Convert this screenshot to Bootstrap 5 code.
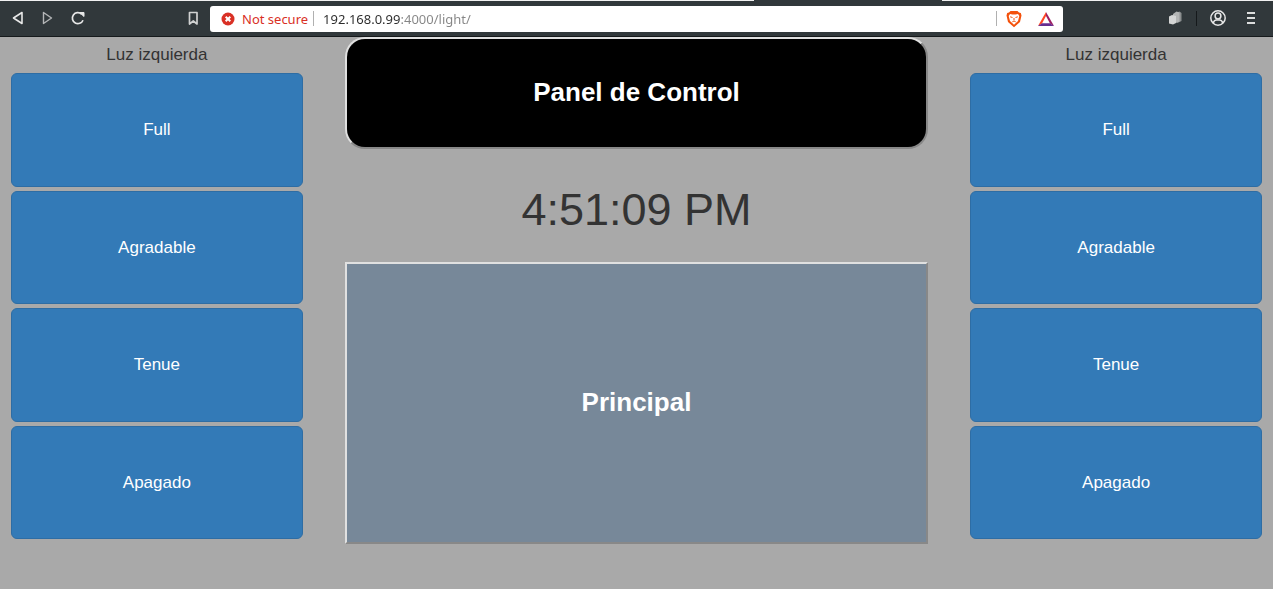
<!DOCTYPE html>
<html lang="es">
<head>
<meta charset="utf-8">
<meta name="viewport" content="width=device-width, initial-scale=1">
<title>Panel de Control</title>
<link href="https://cdn.jsdelivr.net/npm/bootstrap@5.3.0/dist/css/bootstrap.min.css" rel="stylesheet">
<style>
  body { background: #a9a9a9; color: #333; font-family: "Liberation Sans", Arial, sans-serif; font-size: 17px; line-height: 24px; }

  /* browser toolbar */
  .tab-edge { height: 1px; background: linear-gradient(to right, #f2f2f2 754px, #31383b 754px 942px, #f2f2f2 942px); }
  .toolbar { height: 36px; background: #31383b; border-bottom: 1px solid #161a1c; font-family: "Noto Sans", sans-serif; font-size: 13px; line-height: 18px; }
  .tool-btn { width: 30px; height: 26px; padding: 0 0 2px; color: #e8e8e8; }
  .tool-btn svg, .address svg { display: block; }
  .nav-tools { width: 208px; padding-left: 3px; }
  .menu-tools { width: 113px; padding-right: 7px; }
  .address { height: 26px; margin: 0 97px 0 2px; padding: 0 8px 0 11px; border-radius: 3px; background: #fff; }
  .warn { margin: 0 5px 0 7px; color: #d93025; }
  .divider { width: 1px; height: 15px; background: #b0b0b0; }
  .divider-dark { width: 1px; height: 15px; margin: 0 6px; background: #15191b; }
  .url { min-width: 0; margin-left: 9px; color: transparent; background: linear-gradient(to right, #2c2c2c 77px, #858585 77px); -webkit-background-clip: text; background-clip: text; outline: 0; }
  .shield { margin: 0 15px 0 9px; }

  /* control panel */
  .panel-grid { display: grid; grid-template-columns: 1fr 2fr 1fr; column-gap: 42px; padding: 0 11px; }
  .side-title { font-size: 17px; line-height: 24px; padding: 6px 0; }
  .light-list { display: grid; grid-auto-rows: 1fr; gap: 4px; min-height: 466px; }
  .btn-light-level { --bs-btn-color: #fff; --bs-btn-bg: #337ab7; --bs-btn-border-color: #2e6da4; --bs-btn-hover-color: #fff; --bs-btn-hover-bg: #286090; --bs-btn-hover-border-color: #204d74; --bs-btn-font-size: 17px; --bs-btn-border-radius: 6px; }
  .panel-btn { border: 2px solid; border-color: #e0e0e0 #888 #888 #e0e0e0; color: #fff; font-size: 26px; line-height: 36px; padding: 0 0 2px; }
  .panel-title { height: 112px; background: #000; border-radius: 20px; }
  .panel-main { height: 282px; background: #789; }
  .clock { font-size: 45px; line-height: 53px; padding: 34px 0 26px; }
</style>
</head>
<body>
<header>
  <div class="tab-edge"></div>
  <nav class="toolbar d-flex align-items-center" aria-label="Navegador">
    <div class="nav-tools d-flex flex-shrink-0">
      <button class="tool-btn btn border-0 d-flex align-items-center justify-content-center" aria-label="Back"><svg width="16" height="16" fill="none" stroke="currentColor" stroke-width="1.6" stroke-linejoin="round"><path d="M12 2.5v11L3.5 8z"/></svg></button>
      <button class="tool-btn btn border-0 d-flex align-items-center justify-content-center" aria-label="Forward"><svg width="16" height="16" fill="none" stroke="#b4b6b7" stroke-width="1.4" stroke-linejoin="round"><path d="M3.500 2.500v11L11.500 8z"/></svg></button>
      <button class="tool-btn btn border-0 d-flex align-items-center justify-content-center" aria-label="Reload"><svg width="16" height="16" fill="none" stroke="currentColor" stroke-width="1.7"><path d="M13 10.2A5.5 5.500 0 1 1 11.500 4"/><path d="M9.500 2.500h4.500v4z" fill="currentColor" stroke-width="1" stroke-linejoin="round"/></svg></button>
      <button class="tool-btn btn border-0 d-flex align-items-center justify-content-center ms-auto" aria-label="Bookmark"><svg width="16" height="16" fill="none" stroke="#d0d1d1" stroke-width="1.7" stroke-linejoin="round"><path d="M4.500 2.500h7.500v11.500l-3.700-3-3.800 3z"/></svg></button>
    </div>
    <div class="address d-flex align-items-center flex-grow-1">
      <svg class="flex-shrink-0" width="14" height="14"><circle cx="7" cy="7" r="6.500" fill="#d93025"/><path d="M4.700 4.700l4.600 4.600m0-4.600L4.700 9.300" stroke="#fff" stroke-width="2"/></svg>
      <label class="warn text-nowrap" for="url">Not secure</label>
      <span class="divider"></span>
      <input id="url" class="url border-0 p-0 flex-grow-1" type="text" value="192.168.0.99:4000/light/">
      <span class="divider"></span>
      <button class="shield btn p-0 border-0" aria-label="Brave Shields"><svg width="16" height="18"><path d="M4.500 1h7l1.500 1.500 1.800.5.700 2.500L14 12l-6 5.300L2 12 .5 5.500 1.200 3 3 2.500z" fill="#f4510b"/><path d="M4 4l2.500.5h3L12 4l1.300 2-1.300 5L8 14.800 4 11 2.700 6z" fill="#fff"/><path d="M4.200 6.800l2.300.7M11.800 6.800l-2.300.7M8 8v2.200M6.300 11.800L8 11l1.700.8" fill="none" stroke="#f4510b" stroke-width="1"/></svg></button>
      <button class="rewards btn p-0 border-0" aria-label="Brave Rewards"><svg width="18" height="16"><path d="M9 1L1 15l4-2.500L9 5z" fill="#ff4724"/><path d="M9 1l8 14-4-2.500L9 5z" fill="#9e1f63"/><path d="M1 15h16l-4-2.800H5z" fill="#662d91"/></svg></button>
    </div>
    <div class="menu-tools d-flex align-items-center flex-shrink-0">
      <button class="tool-btn btn border-0 d-flex align-items-center justify-content-center" aria-label="Extension"><svg width="16" height="16"><path d="M8.500 3l4-1.500 2 1.500v8l-4 2-2-1z" fill="#8c8f90"/><path d="M6 4l3.500-2.500 3 1v9l-4 1.500-2.500-1z" fill="#b3b5b5"/><path d="M2 6.500L5 5l4 1v7l-3 1.500-4-1z" fill="#d4d5d5"/></svg></button>
      <span class="divider-dark"></span>
      <button class="tool-btn btn border-0 d-flex align-items-center justify-content-center" aria-label="Profile"><svg width="18" height="18" fill="none" stroke="currentColor" stroke-width="1.500"><circle cx="9" cy="9" r="7.200"/><circle cx="9" cy="7" r="2.900"/><path d="M4.300 14c.5-2 1.700-3 3.200-3h3c1.500 0 2.700 1 3.200 3"/></svg></button>
      <button class="tool-btn btn border-0 d-flex align-items-center justify-content-center ms-auto" aria-label="Menu"><svg width="10" height="14"><path d="M1 2h8M1 7h8M1 12h8" stroke="#dcdddd" stroke-width="2"/></svg></button>
    </div>
  </nav>
</header>
<main class="panel-grid">
  <section aria-labelledby="left-title">
    <h2 id="left-title" class="side-title text-center fw-normal m-0">Luz izquierda</h2>
    <div class="light-list">
      <button class="btn btn-light-level">Full</button>
      <button class="btn btn-light-level">Agradable</button>
      <button class="btn btn-light-level">Tenue</button>
      <button class="btn btn-light-level">Apagado</button>
    </div>
  </section>
  <section class="text-center">
    <button class="panel-btn panel-title w-100 fw-bold d-block">Panel de Control</button>
    <div class="clock">4:51:09 PM</div>
    <button class="panel-btn panel-main w-100 fw-bold d-block">Principal</button>
  </section>
  <section aria-labelledby="right-title">
    <h2 id="right-title" class="side-title text-center fw-normal m-0">Luz izquierda</h2>
    <div class="light-list">
      <button class="btn btn-light-level">Full</button>
      <button class="btn btn-light-level">Agradable</button>
      <button class="btn btn-light-level">Tenue</button>
      <button class="btn btn-light-level">Apagado</button>
    </div>
  </section>
</main>
<script src="https://cdn.jsdelivr.net/npm/bootstrap@5.3.0/dist/js/bootstrap.bundle.min.js"></script>
</body>
</html>
